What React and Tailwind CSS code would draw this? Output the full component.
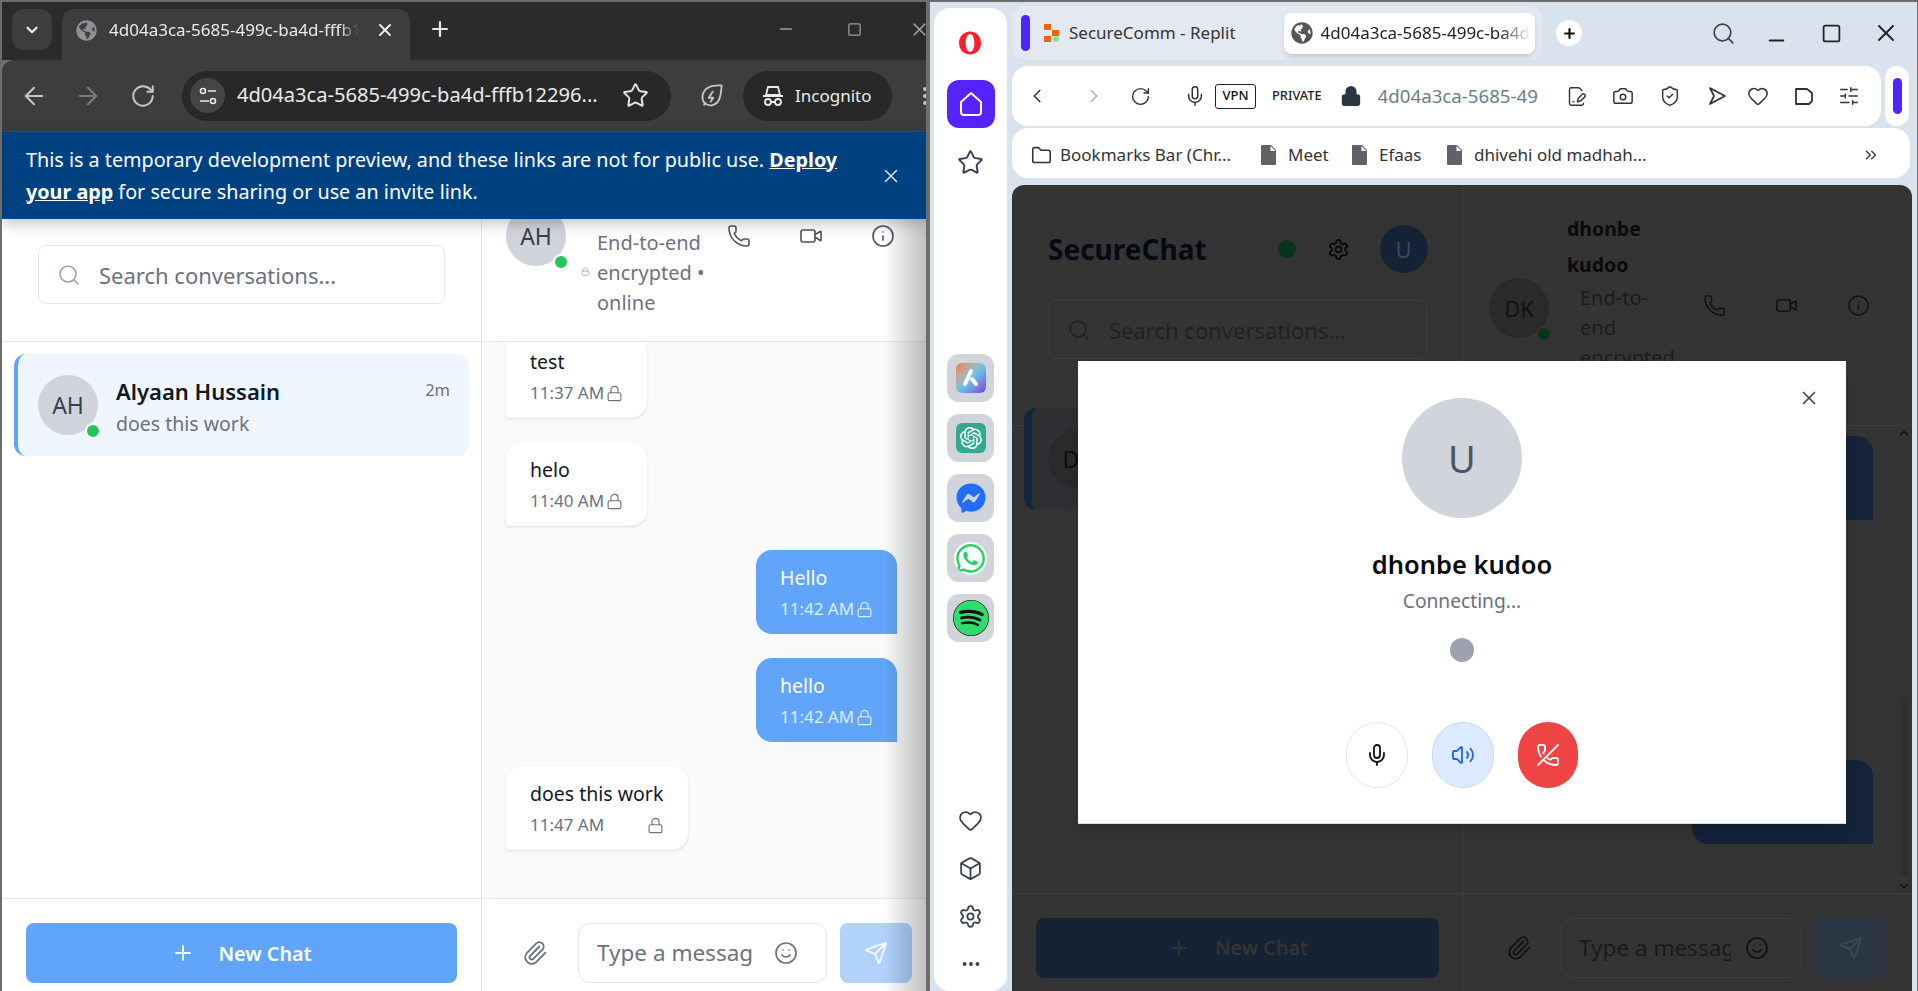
import React from "react";
import {
  ArrowLeft, ArrowRight, Box, Camera, ChevronDown, ChevronLeft, ChevronRight, ChevronsRight, ChevronUp, Ellipsis, FilePenLine,
  Heart, Info, Lock, Mic, Minus, Paperclip, Phone, PhoneOff, Plus, RotateCw, Search, Send, Settings, ShieldCheck,
  SlidersHorizontal, Smile, Square, Star, Video, Volume2, X, Folder,
} from "lucide-react";
import { FaFacebookMessenger, FaWhatsapp, FaSpotify, FaGlobeAmericas } from "react-icons/fa";
import { SiOpenai } from "react-icons/si";

const FONT = { fontFamily: '"Noto Sans", "Open Sans", sans-serif' };

function Dot({ className }) {
  return <span className={"absolute rounded-full bg-[#22c55e] border-2 border-white w-[16px] h-[16px] " + className} />;
}

function Avatar({ label }) {
  return (
    <div className="relative w-[60px] h-[60px] shrink-0 rounded-full bg-[#d1d5db] flex items-center justify-center text-[23px] text-[#374151]">
      {label}
      <Dot className="right-[-3px] bottom-[-4px]" />
    </div>
  );
}

function Bubble({ text, time, me, wide }) {
  return (
    <div className={me
      ? "h-[84px] w-[141px] self-end px-[24px] pt-[13px] rounded-2xl rounded-br-none bg-[#60a5fa] text-white shrink-0"
      : (wide ? "w-[182px]" : "w-[141px]") + " h-[84px] px-[24px] pt-[13px] rounded-2xl rounded-bl-none bg-white text-[#111827] shadow-sm shrink-0"}>
      <div className="text-[19.500px] leading-[30px]">{text}</div>
      <div className={(me ? "text-white/80" : "text-[#6b7280]") + " mt-[2px] flex items-center justify-between text-[17px] leading-[28px] whitespace-nowrap"}>
        <span>{time}</span>
        <Lock size={17} strokeWidth={1.6} className="shrink-0" />
      </div>
    </div>
  );
}

function Incognito() {
  return (
    <svg width="24" height="24" viewBox="0 0 24 24" fill="none" stroke="#e8eaed" strokeWidth="1.8" className="shrink-0">
      <path d="M7 3h10l2 8H5z" fill="none" />
      <path d="M2 12h20" />
      <circle cx="7" cy="18" r="3" />
      <circle cx="17" cy="18" r="3" />
      <path d="M10 18h4" />
    </svg>
  );
}

function Tune() {
  return (
    <svg width="20" height="20" viewBox="0 0 20 20" fill="none" stroke="#e8eaed" strokeWidth="1.6">
      <circle cx="5" cy="5" r="2.500" />
      <path d="M10 5h8" />
      <circle cx="15" cy="15" r="2.500" />
      <path d="M2 15h9" />
    </svg>
  );
}

function Leaf() {
  return (
    <svg width="27" height="27" viewBox="0 0 24 24" fill="none" stroke="#c4c7c5" strokeWidth="1.6" strokeLinejoin="round">
      <path d="M21 3c0 0-9-.5-13 2.500C3 9.500 3 15.500 6 19c4 3 10 2 12.500-3C20.500 12 21 3 21 3z" />
      <path d="M13.500 8l-4 6h4l-2.500 4" />
      <path d="M5 21l2-3" />
    </svg>
  );
}

function OperaO({ size = 24 }) {
  return (
    <svg width={size} height={size} viewBox="0 0 24 24">
      <path fill="#ff1b2d" fillRule="evenodd" d="M12 .5C5.700.5 1 5.600 1 12s4.700 11.500 11 11.500S23 18.400 23 12 18.300.500 12 .500zm0 2.500c2.600 0 4.400 4 4.400 9s-1.800 9-4.400 9-4.400-4-4.400-9 1.800-9 4.400-9z" />
    </svg>
  );
}

function Tile({ children, className = "" }) {
  return <div className={"w-[47px] h-[48px] rounded-xl bg-[#d1d5db] flex items-center justify-center " + className}>{children}</div>;
}

function Rail() {
  return (
    <div className="ml-[4px] mt-[6px] w-[73px] shrink-0 bg-white rounded-t-2xl rounded-b-2xl flex flex-col items-center text-[#374151]">
      <div className="mt-[19px] mb-[21px] h-[32px] flex items-center -ml-[2px]"><OperaO size={24} /></div>
      <div className="w-[48px] h-[48px] rounded-xl bg-[#5622ff] flex items-center justify-center">
        <svg width="26" height="28" viewBox="0 0 26 28" fill="none" stroke="#fff" strokeWidth="2" strokeLinejoin="round">
          <path d="M13 3L3 12v10a3 3 0 0 0 3 3h14a3 3 0 0 0 3-3V12z" />
        </svg>
      </div>
      <div className="mt-[21px]"><Star size={27} strokeWidth={1.7} /></div>
      <div className="mt-[178px] flex flex-col gap-[12px]">
        <Tile>
          <div className="w-[30px] h-[30px] rounded-md flex items-center justify-center bg-gradient-to-br from-[#f97316] via-[#67c5e8] to-[#7c2fd6]">
            <svg width="20" height="20" viewBox="0 0 20 20" fill="none" stroke="#fff" strokeWidth="4" strokeLinecap="round"><path d="M10 3L4 16M11 11l4 5" /></svg>
          </div>
        </Tile>
        <Tile>
          <div className="w-[30px] h-[30px] rounded-md bg-[#35a98d] flex items-center justify-center"><SiOpenai size={22} color="#fff" /></div>
        </Tile>
        <Tile><FaFacebookMessenger size={30} color="#1e6fff" /></Tile>
        <Tile><FaWhatsapp size={33} color="#25d366" className="bg-white rounded-full" /></Tile>
        <Tile><FaSpotify size={36} color="#2fdc6e" className="bg-[#111] rounded-full" /></Tile>
      </div>
      <div className="mt-[166px]"><Heart size={25} strokeWidth={1.7} /></div>
      <div className="mt-[23px]"><Box size={25} strokeWidth={1.7} /></div>
      <div className="mt-[23px]"><Settings size={25} strokeWidth={1.7} /></div>
      <div className="mt-[24px]"><Ellipsis size={22} strokeWidth={2.2} /></div>
    </div>
  );
}

function LeftWindow() {
  return (
    <div className="w-[926px] shrink-0 flex flex-col border-l-2 border-[#6d6d6d] overflow-hidden">
      {/* title bar */}
      <div className="h-[58px] shrink-0 bg-[#2b2b2b] flex items-start pl-[10px] pt-[7px] text-[#e8eaed] overflow-hidden">
        <div className="w-[40px] h-[41px] shrink-0 rounded-xl bg-[#3d3d3d] flex items-center justify-center"><ChevronDown size={18} strokeWidth={3} /></div>
        <div className="ml-[10px] w-[348px] h-[51px] shrink-0 rounded-t-xl bg-[#3d3d3d] flex items-center pl-[14px] pb-[9px]">
          <FaGlobeAmericas size={21} className="text-[#8e9399] shrink-0" />
          <span className="ml-[12px] w-[250px] shrink-0 overflow-hidden whitespace-nowrap text-[17px] [mask-image:linear-gradient(to_right,black_92%,transparent)]">4d04a3ca-5685-499c-ba4d-fffb12296</span>
          <X size={20} strokeWidth={2.4} className="ml-[16px] shrink-0" />
        </div>
        <Plus size={24} strokeWidth={2.2} className="ml-[18px] mt-[8px] shrink-0" />
        <Minus size={18} className="ml-[325px] mt-[11px] text-[#9aa0a6] shrink-0" />
        <Square size={15} className="ml-[52px] mt-[13px] text-[#9aa0a6] shrink-0" />
        <X size={21} className="ml-[47px] mt-[10px] text-[#9aa0a6] shrink-0" />
      </div>
      {/* toolbar */}
      <div className="h-[71px] shrink-0 bg-[#3d3d3d] rounded-tl-xl flex items-center text-[#c4c7c5] pl-[18px] overflow-hidden">
        <ArrowLeft size={28} strokeWidth={1.8} className="shrink-0" />
        <ArrowRight size={28} strokeWidth={1.8} className="ml-[26px] text-[#7a7a7a] shrink-0" />
        <RotateCw size={26} strokeWidth={1.8} className="ml-[28px] shrink-0" />
        <div className="ml-[26px] w-[489px] h-[50px] rounded-full bg-[#282828] flex items-center pl-[8px] shrink-0">
          <div className="w-[35px] h-[35px] rounded-full bg-[#444] flex items-center justify-center shrink-0"><Tune /></div>
          <span className="ml-[12px] w-[372px] shrink-0 overflow-hidden whitespace-nowrap text-[20.100px] text-[#e8eaed]">4d04a3ca-5685-499c-ba4d-fffb12296...</span>
          <Star size={27} strokeWidth={1.8} className="ml-[13px] text-[#e3e3e3] shrink-0" />
        </div>
        <div className="ml-[27px] shrink-0"><Leaf /></div>
        <div className="ml-[18px] w-[149px] h-[50px] rounded-full bg-[#282828] flex items-center pl-[18px] shrink-0">
          <Incognito />
          <span className="ml-[10px] text-[17px] text-[#e8eaed]">Incognito</span>
        </div>
        <Ellipsis size={24} className="ml-[21px] rotate-90 shrink-0" />
      </div>
      {/* banner */}
      <div className="relative z-20 h-[88px] shrink-0 bg-[#004182] text-white flex items-center pl-[24px] shadow-[0_4px_14px_rgba(0,0,0,0.25)] border-t border-[#2a4a70]">
        <p className="w-[820px] text-[19.750px] leading-[32px]">
          This is a temporary development preview, and these links are not for public use. <span className="font-bold underline">Deploy your app</span> for secure sharing or use an invite link.
        </p>
        <X size={22} strokeWidth={1.6} className="ml-[34px] text-[#dbe7f3]" />
      </div>
      {/* app */}
      <div className="relative flex-1 min-h-0 flex bg-white overflow-hidden">
        <div className="w-[480px] shrink-0 border-r border-[#e5e7eb] flex flex-col">
          <div className="h-[123px] shrink-0 border-b border-[#e5e7eb] pt-[26px] pl-[36px]">
            <div className="w-[407px] h-[59px] rounded-lg border border-[#e5e7eb] flex items-center pl-[18px]">
              <Search size={24} strokeWidth={1.6} className="text-[#9ca3af] shrink-0" />
              <span className="ml-[18px] mt-[2px] text-[22px] text-[#6b7280] whitespace-nowrap">Search conversations...</span>
            </div>
          </div>
          <div className="flex-1 pt-[12px] pl-[12px]">
            <div className="w-[455px] h-[102px] rounded-xl bg-[#eff6ff] border-l-4 border-[#60a5fa] flex pl-[20px] pr-[19px] pt-[21px]">
              <Avatar label="AH" />
              <div className="ml-[18px] flex-1">
                <div className="flex items-center justify-between leading-[32px]">
                  <span className="text-[22px] font-semibold text-[#111827]">Alyaan Hussain</span>
                  <span className="text-[16.500px] text-[#6b7280] -mt-[3px]">2m</span>
                </div>
                <div className="mt-[2px] text-[19.500px] leading-[30px] text-[#6b7280]">does this work</div>
              </div>
            </div>
          </div>
          <div className="h-[93px] shrink-0 border-t border-[#e5e7eb] pt-[24px] pl-[24px]">
            <div className="w-[431px] h-[60px] rounded-lg bg-[#60a5fa] text-white flex items-center justify-center">
              <Plus size={24} strokeWidth={1.8} />
              <span className="ml-[23px] mt-[1px] text-[19.750px] font-semibold">New Chat</span>
            </div>
          </div>
        </div>
        <div className="flex-1 min-w-0 flex flex-col">
          <div className="h-[123px] shrink-0 border-b border-[#e5e7eb] flex items-start pl-[24px]">
            <div className="-mt-[13px]"><Avatar label="AH" /></div>
            <div className="ml-[15px] mt-[9px] flex items-start">
              <Lock size={9} className="mt-[39px] text-[#9ca3af] shrink-0" />
              <div className="ml-[7px] w-[120px] text-[20px] leading-[30px] text-[#6b7280]">End-to-end encrypted • online</div>
            </div>
            <Phone size={24} strokeWidth={1.6} className="ml-[10px] mt-[5px] text-[#4b5563] shrink-0" />
            <Video size={24} strokeWidth={1.6} className="ml-[48px] mt-[5px] text-[#4b5563] shrink-0" />
            <Info size={24} strokeWidth={1.6} className="ml-[48px] mt-[5px] text-[#4b5563] shrink-0" />
          </div>
          <div className="flex-1 min-h-0 bg-[#f9fafb] flex flex-col gap-[24px] pl-[24px] pr-[29px] overflow-hidden">
            <div className="-mt-[8px] flex flex-col gap-[24px]">
              <Bubble text="test" time="11:37 AM" />
              <Bubble text="helo" time="11:40 AM" />
              <Bubble text="Hello" time="11:42 AM" me />
              <Bubble text="hello" time="11:42 AM" me />
              <Bubble text="does this work" time="11:47 AM" wide />
            </div>
          </div>
          <div className="h-[93px] shrink-0 border-t border-[#e5e7eb] bg-white pt-[24px] pl-[40px] flex items-start">
            <Paperclip size={26} strokeWidth={1.7} className="mt-[17px] text-[#6b7280] shrink-0" />
            <div className="ml-[30px] w-[249px] h-[60px] rounded-xl border border-[#e5e7eb] flex items-center pl-[18px] shrink-0">
              <input readOnly placeholder="Type a message..." className="w-[157px] text-[22.500px] outline-none placeholder:text-[#6b7280]" style={FONT} />
              <Smile size={24} strokeWidth={1.7} className="ml-[20px] text-[#6b7280] shrink-0" />
            </div>
            <div className="ml-[13px] w-[72px] h-[60px] rounded-lg bg-[#b0d2fd] flex items-center justify-center text-white shrink-0">
              <Send size={24} strokeWidth={1.7} />
            </div>
          </div>
        </div>
        {/* shadow of the neighbouring window */}
        <div className="absolute inset-y-0 right-0 w-[42px] bg-gradient-to-r from-transparent to-black/25 pointer-events-none" />
      </div>
    </div>
  );
}

function OperaChrome() {
  return (
    <>
      <div className="mt-[4px] h-[54px] shrink-0 flex items-center">
        <div className="w-[530px] h-[54px] rounded-xl bg-[#e2e9f1] flex items-center pl-[9px] shrink-0">
          <div className="w-[9px] h-[36px] rounded-full bg-[#4f25ff]" />
          <svg width="16" height="18" viewBox="0 0 16 18" className="ml-[14px]">
            <rect x="0" y="0" width="7" height="6" fill="#f26207" />
            <rect x="8" y="6" width="7" height="6" fill="#f26207" />
            <rect x="0" y="12" width="7" height="6" fill="#f26207" />
            <circle cx="12" cy="15" r="3" fill="#7fe39b" />
          </svg>
          <span className="ml-[9px] text-[17px] text-[#333] whitespace-nowrap">SecureComm - Replit</span>
          <div className="ml-[48px] w-[251px] h-[41px] rounded-lg bg-white shadow-md flex items-center pl-[7px] overflow-hidden shrink-0">
            <FaGlobeAmericas size={22} className="text-[#555] shrink-0" />
            <span className="ml-[8px] w-[210px] overflow-hidden whitespace-nowrap text-[17px] text-[#222] [mask-image:linear-gradient(to_right,black_85%,transparent)]">4d04a3ca-5685-499c-ba4d</span>
          </div>
        </div>
        <div className="ml-[14px] w-[26px] h-[26px] rounded-full bg-white flex items-center justify-center text-[#111]"><Plus size={15} strokeWidth={3.4} /></div>
        <Search size={25} strokeWidth={1.6} className="ml-[129px] text-[#444]" />
        <Minus size={23} strokeWidth={2.2} className="ml-[29px] mt-[14px] text-[#222]" />
        <Square size={21} strokeWidth={2} className="ml-[33px] text-[#222]" />
        <X size={28} strokeWidth={1.6} className="ml-[30px] text-[#222]" />
      </div>
      <div className="mt-[6px] h-[60px] shrink-0 flex">
        <div className="w-[869px] h-[60px] rounded-2xl bg-white flex items-center pl-[14px] text-[#333] shrink-0">
          <ChevronLeft size={22} strokeWidth={1.7} />
          <ChevronRight size={22} strokeWidth={1.4} className="ml-[35px] text-[#aaa]" />
          <RotateCw size={21} strokeWidth={1.6} className="ml-[25px]" />
          <Mic size={22} strokeWidth={1.6} className="ml-[33px]" />
          <span className="ml-[9px] w-[41px] h-[25px] rounded-[3px] border border-[#222] flex items-center justify-center text-[13px] font-medium text-[#111]">VPN</span>
          <span className="ml-[16px] text-[12.800px] font-medium text-[#222]">PRIVATE</span>
          <Lock size={22} strokeWidth={2} fill="#2b3844" className="ml-[18px] text-[#2b3844]" />
          <span className="ml-[16px] w-[164px] overflow-hidden whitespace-nowrap text-[18.700px] text-[#6b7d8c]">4d04a3ca-5685-49</span>
          <FilePenLine size={21} strokeWidth={1.6} className="ml-[24px]" />
          <Camera size={22} strokeWidth={1.6} className="ml-[25px]" />
          <ShieldCheck size={22} strokeWidth={1.6} className="ml-[25px]" />
          <svg width="22" height="22" viewBox="0 0 22 22" fill="none" stroke="currentColor" strokeWidth="1.7" strokeLinejoin="round" className="ml-[25px]"><path d="M4 3l15 8-15 8 4-8z" /></svg>
          <Heart size={22} strokeWidth={1.6} className="ml-[19px]" />
          <svg width="22" height="22" viewBox="0 0 22 22" fill="none" stroke="currentColor" strokeWidth="1.8" strokeLinejoin="round" className="ml-[24px]"><path d="M3 4h11l5 4v8l-3 3H3z" /></svg>
          <SlidersHorizontal size={22} strokeWidth={1.6} className="ml-[23px]" />
        </div>
        <div className="ml-[4px] w-[24px] h-[60px] rounded-xl bg-white flex items-center justify-center shrink-0">
          <div className="w-[9px] h-[36px] rounded-full bg-[#4f25ff]" />
        </div>
      </div>
      <div className="mt-[2px] h-[50px] shrink-0 w-[898px] rounded-2xl bg-white flex items-center pl-[19px] pt-[4px] text-[17px] text-[#333] whitespace-nowrap">
        <Folder size={21} strokeWidth={1.8} className="shrink-0" />
        <span className="ml-[8px] w-[172px]">Bookmarks Bar (Chr...</span>
        <BmFile className="ml-[29px]" />
        <span className="ml-[11px] w-[45px]">Meet</span>
        <BmFile className="ml-[19px]" />
        <span className="ml-[11px] w-[43px]">Efaas</span>
        <BmFile className="ml-[25px]" />
        <span className="ml-[11px] w-[172px]">dhivehi old madhah...</span>
        <ChevronsRight size={18} strokeWidth={2} className="ml-[216px] text-[#444]" />
      </div>
    </>
  );
}

function BmFile({ className }) {
  return (
    <svg width="16" height="20" viewBox="0 0 16 20" className={"shrink-0 " + className}>
      <path fill="#5f6368" d="M1 0h9l5 5v14a1 1 0 0 1-1 1H1a1 1 0 0 1-1-1V1a1 1 0 0 1 1-1z" />
      <path fill="#fff" d="M9.500 1v5h5z" />
    </svg>
  );
}

function DarkApp() {
  return (
    <div className="relative flex-1 min-h-0 mt-[7px] mr-[5px] rounded-t-xl bg-[#343434] flex overflow-hidden text-[#0b0b0b]">
      <div className="w-[452px] shrink-0 border-r border-[#3d3d3d] flex flex-col">
        <div className="h-[241px] shrink-0 border-b border-[#3d3d3d] pl-[36px] pr-[36px] pt-[40px]">
          <div className="h-[48px] flex items-center">
            <span className="text-[28px] font-bold text-[#050a12]">SecureChat</span>
            <span className="ml-[71px] w-[18px] h-[18px] rounded-full bg-[#07351a] shrink-0" />
            <Settings size={23} strokeWidth={1.8} className="ml-[31px] text-[#050505] shrink-0" />
            <div className="ml-[30px] w-[48px] h-[48px] rounded-full bg-[#152235] flex items-center justify-center text-[22px] text-[#3b4754] shrink-0">U</div>
          </div>
          <div className="mt-[27px] h-[59px] rounded-lg border border-[#3e3e3e] flex items-center pl-[18px]">
            <Search size={24} strokeWidth={1.6} className="text-[#222] shrink-0" />
            <span className="ml-[18px] mt-[1px] text-[22px] text-[#222] whitespace-nowrap">Search conversations...</span>
          </div>
        </div>
        <div className="flex-1 min-h-0 pl-[12px] -mt-[18px]">
          <div className="w-[415px] h-[102px] rounded-xl bg-[#2e3033] border-l-[8px] border-[#14263b] flex items-center pl-[16px]">
            <div className="w-[60px] h-[60px] rounded-full bg-[#2a2a2a] flex items-center justify-center text-[23px] text-[#0d0d0d]">DK</div>
          </div>
        </div>
        <div className="h-[98px] shrink-0 border-t border-[#3d3d3d] pt-[24px] pl-[24px]">
          <div className="w-[403px] h-[60px] rounded-lg bg-[#152233] text-[#333] flex items-center justify-center">
            <Plus size={24} strokeWidth={1.8} />
            <span className="ml-[24px] text-[19.750px] font-semibold">New Chat</span>
          </div>
        </div>
      </div>
      <div className="flex-1 min-w-0 flex flex-col">
        <div className="h-[241px] shrink-0 border-b border-[#3d3d3d] flex items-start pl-[25px] overflow-hidden">
          <div className="relative mt-[93px] w-[60px] h-[60px] rounded-full bg-[#2a2a2a] flex items-center justify-center text-[22px] text-[#111] shrink-0">
            DK
            <span className="absolute right-[-3px] bottom-[-4px] w-[16px] h-[16px] rounded-full bg-[#07351a] border-2 border-[#343434]" />
          </div>
          <div className="ml-[18px] mt-[26px] w-[110px] shrink-0">
            <div className="w-[90px] text-[19.500px] font-bold leading-[36px] text-[#0a0a0a]">dhonbe kudoo</div>
            <div className="ml-[13px] w-[96px] text-[20px] leading-[30px] text-[#1c1c1c]">End-to-end encrypted • online</div>
          </div>
          <Phone size={23} strokeWidth={1.6} className="ml-[26px] mt-[109px] text-[#111] shrink-0" />
          <Video size={23} strokeWidth={1.6} className="ml-[49px] mt-[109px] text-[#111] shrink-0" />
          <Info size={23} strokeWidth={1.6} className="ml-[49px] mt-[109px] text-[#111] shrink-0" />
        </div>
        <div className="relative flex-1 min-h-0 flex flex-col items-end pr-[39px]">
          <div className="w-[181px] h-[84px] mt-[10px] rounded-2xl rounded-br-none bg-[#14233a]" />
          <div className="w-[181px] h-[84px] mt-[240px] rounded-2xl rounded-br-none bg-[#14233a]" />
          <ChevronUp size={14} strokeWidth={2.4} className="absolute right-[1px] top-[0px] text-[#111]" />
          <div className="absolute right-[4px] bottom-[16px] w-[7px] h-[180px] rounded-full bg-[#2e2f30]" />
          <ChevronDown size={14} strokeWidth={2.4} className="absolute right-[1px] bottom-[0px] text-[#111]" />
        </div>
        <div className="h-[98px] shrink-0 border-t border-[#3d3d3d] pt-[24px] pl-[42px] flex items-start">
          <Paperclip size={26} strokeWidth={1.7} className="mt-[17px] text-[#111] shrink-0" />
          <div className="ml-[28px] w-[242px] h-[60px] rounded-xl border border-[#3e3e3e] flex items-center pl-[18px] shrink-0">
            <span className="w-[152px] overflow-hidden whitespace-nowrap text-[22.500px] text-[#1a1a1a]">Type a message...</span>
            <Smile size={24} strokeWidth={1.7} className="ml-[14px] text-[#111] shrink-0" />
          </div>
          <div className="ml-[13px] w-[71px] h-[60px] rounded-lg bg-[#2a3644] flex items-center justify-center text-[#3d4956] shrink-0">
            <Send size={24} strokeWidth={1.7} />
          </div>
        </div>
      </div>
      {/* call dialog */}
      <div className="absolute left-[66px] top-[176px] w-[768px] h-[463px] bg-white flex flex-col items-center border-b border-[#ddd] shadow-lg">
        <X size={22} strokeWidth={1.8} className="absolute right-[26px] top-[26px] text-[#444]" />
        <div className="mt-[37px] w-[120px] h-[120px] rounded-full bg-[#d1d5db] flex items-center justify-center text-[38px] text-[#4b5563]">U</div>
        <div className="mt-[26px] text-[25.500px] font-semibold leading-[40px] text-[#0a0a0a]">dhonbe kudoo</div>
        <div className="mt-[1px] text-[19.200px] leading-[32px] text-[#6b7280]">Connecting...</div>
        <div className="mt-[21px] w-[24px] h-[24px] rounded-full bg-[#9ca3af]" />
        <div className="mt-[60px] flex items-center gap-[24px]">
          <div className="w-[62px] h-[66px] rounded-full border border-[#e5e7eb] bg-white flex items-center justify-center text-[#111]"><Mic size={24} strokeWidth={1.8} /></div>
          <div className="w-[62px] h-[66px] rounded-full border border-[#bfdbfe] bg-[#dbeafe] flex items-center justify-center text-[#2563eb]"><Volume2 size={24} strokeWidth={1.8} /></div>
          <div className="w-[60px] h-[66px] rounded-full bg-[#ef4444] flex items-center justify-center text-white"><PhoneOff size={24} strokeWidth={1.8} /></div>
        </div>
      </div>
    </div>
  );
}

export default function App() {
  return (
    <div className="w-[1918px] h-[991px] overflow-hidden bg-[#6d6d6d] pt-[2px] pr-[1px] flex" style={FONT}>
      <LeftWindow />
      <div className="ml-[4px] flex-1 min-w-0 flex bg-[#d8e3ed]">
        <Rail />
        <div className="ml-[5px] flex-1 min-w-0 flex flex-col">
          <OperaChrome />
          <DarkApp />
        </div>
      </div>
    </div>
  );
}
